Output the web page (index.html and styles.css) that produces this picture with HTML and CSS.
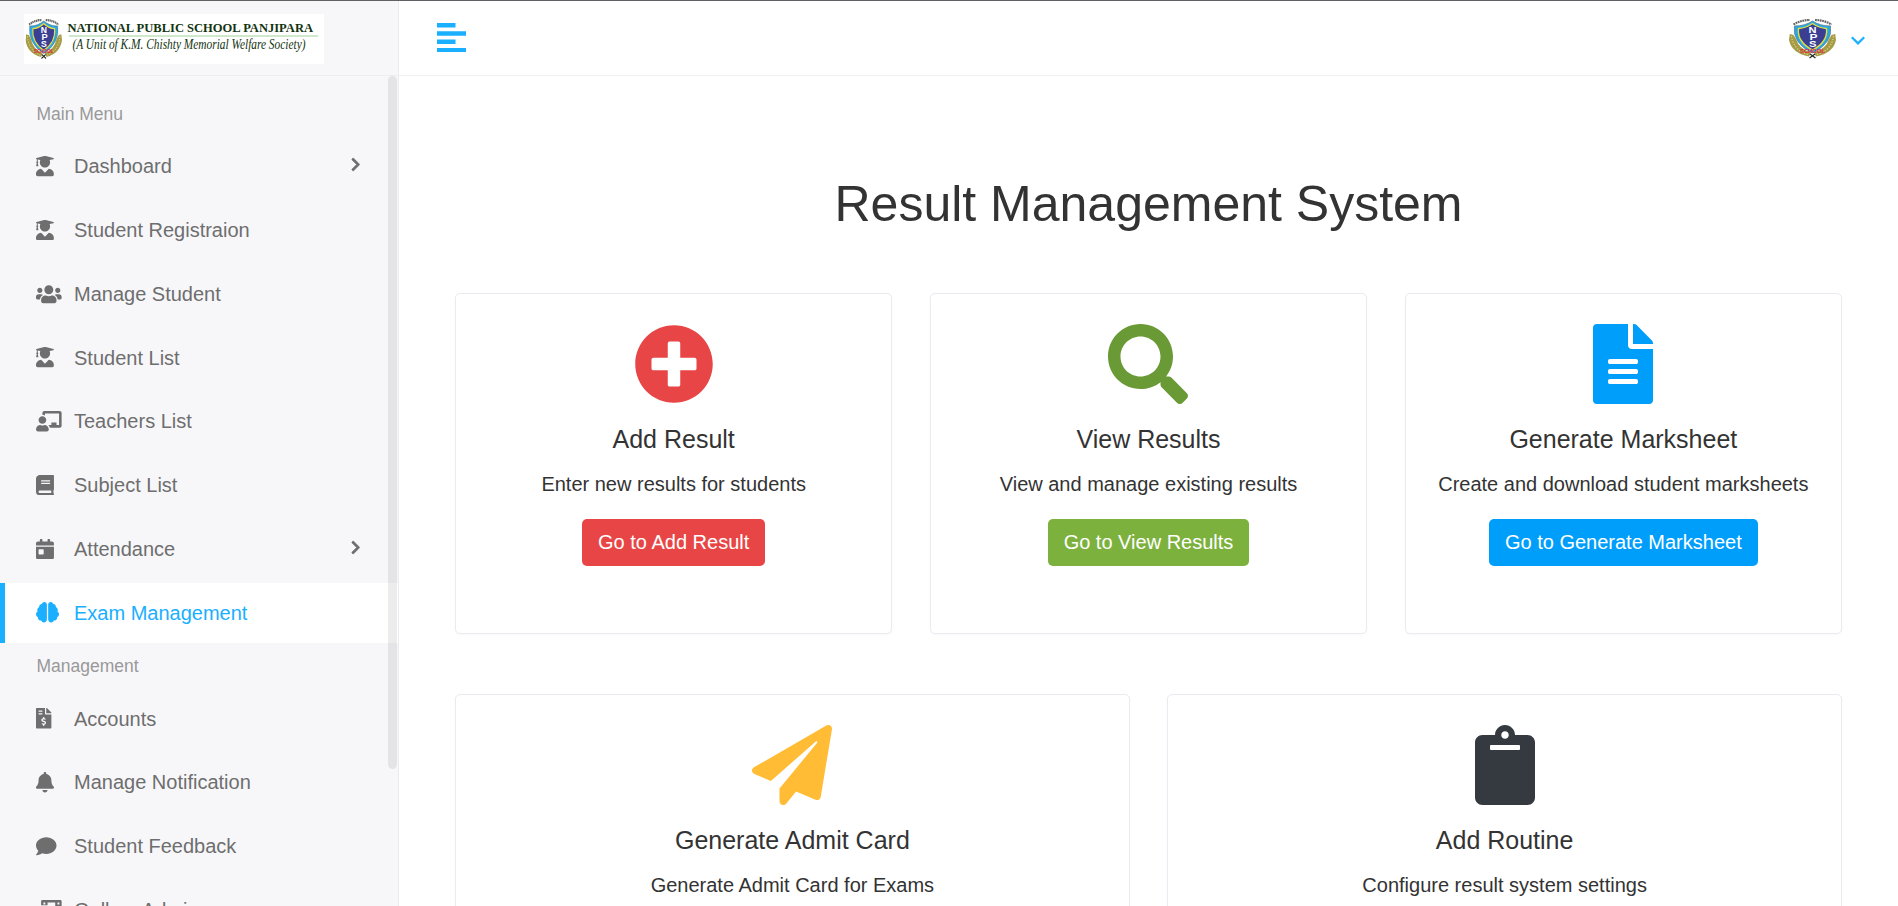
FILE: index.html
```html
<!DOCTYPE html>
<html lang="en">
<head>
<meta charset="utf-8">
<title>Result Management System</title>
<link rel="stylesheet" href="styles.css">
</head>
<body>
<svg class="defs" aria-hidden="true">
  <symbol id="graduate" viewBox="0 0 448 512"><path d="M319.4 320.6L224 416l-95.4-95.4C57.1 323.7 0 382.2 0 454.4v9.6c0 26.5 21.5 48 48 48h352c26.5 0 48-21.5 48-48v-9.6c0-72.2-57.1-130.7-128.6-133.8zM13.6 79.8l6.4 1.5v58.4c-7 4.2-12 11.5-12 20.3 0 8.4 4.6 15.4 11.1 19.7L3.5 242c-1.7 6.9 2.1 14 7.6 14h41.8c5.5 0 9.3-7.1 7.6-14l-15.6-62.3C51.4 175.4 56 168.4 56 160c0-8.8-5-16.1-12-20.3V87.1l66 15.9c-8.6 17.2-14 36.4-14 57 0 70.7 57.3 128 128 128s128-57.3 128-128c0-20.6-5.3-39.8-14-57l96.3-23.2c18.2-4.4 18.2-27.1 0-31.5l-190.4-46c-13-3.1-26.7-3.1-39.7 0L13.6 48.2c-18.1 4.4-18.1 27.2 0 31.6z"/></symbol>
  <symbol id="chevron" viewBox="0 0 320 512"><path d="M285.476 272.971L91.132 467.314c-9.373 9.373-24.569 9.373-33.941 0l-22.667-22.667c-9.357-9.357-9.375-24.522-.04-33.901L188.505 256 34.484 101.255c-9.335-9.379-9.317-24.544.04-33.901l22.667-22.667c9.373-9.373 24.569-9.373 33.941 0L285.475 239.03c9.373 9.372 9.373 24.568.001 33.941z"/></symbol>
  <symbol id="crest" viewBox="0 0 47 41" preserveAspectRatio="none">
    <path d="M.8 16L0 22Q2.500 35 20 38.500L22 34.500Q10 31 7 21L4.500 17zM46.200 16L47 22Q44.500 35 27 38.500L25 34.500Q37 31 40 21L42.500 17z" fill="#a59c45"/>
    <path d="M2.500 18Q4 32 19 36.500M44.500 18Q43 32 28 36.500" fill="none" stroke="#d8d08c" stroke-width="1.200" stroke-dasharray="1.300 1.500"/>
    <path d="M23.500 3Q16 8 5.500 8Q3 25 23.500 35Q44 25 41.500 8Q31 8 23.500 3Z" fill="#27a9e6" stroke="#5d7f90" stroke-width=".8"/>
    <path d="M23.500 5.500Q17 10 9.500 10.500Q8 24 23.500 32Q39 24 37.500 10.500Q30 10 23.500 5.500Z" fill="#3b3f93" stroke="#e3dd3e" stroke-width="1.400"/>
    <path d="M4.500 6.500Q12 2 21 2M26 2Q35 2 42.500 6.500" fill="none" stroke="#666" stroke-width="2.200" stroke-dasharray="1.800 .6"/>
    <text x="19.500" y="15" textLength="8" lengthAdjust="spacingAndGlyphs" class="crest-letter">N</text>
    <text x="20.500" y="21.500" textLength="8" lengthAdjust="spacingAndGlyphs" class="crest-letter">P</text>
    <text x="20" y="28.500" textLength="7.500" lengthAdjust="spacingAndGlyphs" class="crest-letter">S</text>
    <text x="11" y="34.600" textLength="25" lengthAdjust="spacingAndGlyphs" class="crest-name">SCHOOL</text>
    <path d="M20.500 40l5.500-4M26.500 40l-5.500-4" stroke="#222" stroke-width="1.200" fill="none"/>
  </symbol>
</svg>
<div class="app">
  <aside class="sidebar">
    <div class="brand">
      <svg class="logo" viewBox="0 0 300 50">
        <rect width="300" height="50" fill="#fff"/>
        <use href="#crest" x="1.500" y="4" width="36.500" height="41.500"/>
        <text x="43.500" y="17.900" textLength="245.500" lengthAdjust="spacingAndGlyphs" class="logo-name">NATIONAL PUBLIC SCHOOL PANJIPARA</text>
        <path d="M45 22h249" stroke="#cfe8cb" stroke-width="2"/>
        <text x="48.500" y="35.300" textLength="233" lengthAdjust="spacingAndGlyphs" class="logo-sub">(A Unit of K.M. Chishty Memorial Welfare Society)</text>
      </svg>
    </div>
    <nav class="menu">
      <div class="label">Main Menu</div>
      <a class="item"><span class="ico"><svg viewBox="0 0 448 512"><use href="#graduate"/></svg></span>Dashboard<svg class="arrow" viewBox="0 0 320 512"><use href="#chevron"/></svg></a>
      <a class="item"><span class="ico"><svg viewBox="0 0 448 512"><use href="#graduate"/></svg></span>Student Registraion</a>
      <a class="item"><span class="ico"><svg viewBox="0 0 640 512"><path d="M96 224c35.3 0 64-28.7 64-64s-28.7-64-64-64-64 28.7-64 64 28.7 64 64 64zm448 0c35.3 0 64-28.7 64-64s-28.7-64-64-64-64 28.7-64 64 28.7 64 64 64zm32 32h-64c-17.6 0-33.5 7.1-45.1 18.6 40.3 22.1 68.9 62 75.1 109.4h66c17.7 0 32-14.3 32-32v-32c0-35.3-28.7-64-64-64zm-256 0c61.9 0 112-50.1 112-112S381.9 32 320 32 208 82.1 208 144s50.1 112 112 112zm76.8 32h-8.3c-20.8 10-43.9 16-68.5 16s-47.6-6-68.5-16h-8.3C179.6 288 128 339.6 128 403.2V432c0 26.5 21.5 48 48 48h288c26.500 0 48-21.500 48-48v-28.800c0-63.600-51.600-115.200-115.200-115.200zm-223.700-13.400C161.500 263.100 145.600 256 128 256H64c-35.300 0-64 28.700-64 64v32c0 17.700 14.300 32 32 32h65.900c6.300-47.400 34.900-87.300 75.200-109.400z"/></svg></span>Manage Student</a>
      <a class="item"><span class="ico"><svg viewBox="0 0 448 512"><use href="#graduate"/></svg></span>Student List</a>
      <a class="item"><span class="ico"><svg viewBox="0 0 640 512"><path d="M208 352c-2.390 0-4.780.35-7.060 1.090C187.980 357.300 174.350 360 160 360c-14.350 0-27.980-2.700-40.950-6.910-2.280-.74-4.660-1.090-7.050-1.090C49.940 352-.33 402.480 0 464.620.14 490.880 21.730 512 48 512h224c26.270 0 47.860-21.120 48-47.380.33-62.140-49.940-112.620-112-112.620zm-48-32c53.020 0 96-42.980 96-96s-42.980-96-96-96-96 42.980-96 96 42.980 96 96 96zM592 0H208c-26.470 0-48 22.250-48 49.590V96c23.420 0 45.100 6.780 64 17.800V64h352v288h-64v-64H384v64h-76.240c19.100 16.690 33.120 38.730 39.690 64H592c26.470 0 48-22.250 48-49.590V49.590C640 22.250 618.470 0 592 0z"/></svg></span>Teachers List</a>
      <a class="item"><span class="ico"><svg viewBox="0 0 448 512"><path d="M448 360V24c0-13.300-10.700-24-24-24H96C43 0 0 43 0 96v320c0 53 43 96 96 96h328c13.300 0 24-10.700 24-24v-16c0-7.500-3.500-14.300-8.900-18.700-4.200-15.400-4.200-59.300 0-74.700 5.400-4.300 8.900-11.100 8.900-18.600zM128 134c0-3.300 2.700-6 6-6h212c3.300 0 6 2.700 6 6v20c0 3.300-2.700 6-6 6H134c-3.300 0-6-2.700-6-6v-20zm0 64c0-3.300 2.700-6 6-6h212c3.300 0 6 2.700 6 6v20c0 3.300-2.700 6-6 6H134c-3.300 0-6-2.700-6-6v-20zm253.400 250H96c-17.700 0-32-14.300-32-32 0-17.600 14.400-32 32-32h285.400c-1.900 17.100-1.900 46.900 0 64z"/></svg></span>Subject List</a>
      <a class="item"><span class="ico"><svg viewBox="0 0 448 512"><path d="M0 464c0 26.500 21.500 48 48 48h352c26.500 0 48-21.500 48-48V192H0v272zm64-192c0-8.800 7.200-16 16-16h96c8.800 0 16 7.200 16 16v96c0 8.800-7.200 16-16 16H80c-8.800 0-16-7.200-16-16v-96zM400 64h-48V16c0-8.800-7.200-16-16-16h-32c-8.800 0-16 7.200-16 16v48H160V16c0-8.800-7.200-16-16-16h-32c-8.800 0-16 7.200-16 16v48H48C21.500 64 0 85.500 0 112v48h448v-48c0-26.500-21.500-48-48-48z"/></svg></span>Attendance<svg class="arrow" viewBox="0 0 320 512"><use href="#chevron"/></svg></a>
      <a class="item active"><span class="ico"><svg viewBox="0 0 576 512"><path d="M208 0c-29.900 0-54.700 20.500-61.800 48.200-.8 0-1.400-.2-2.200-.2-35.300 0-64 28.700-64 64 0 4.800.6 9.500 1.700 14C52.500 138 32 166.600 32 200c0 12.600 3.200 24.300 8.300 34.900C16.300 248.700 0 274.300 0 304c0 33.300 20.400 61.900 49.400 73.900-.9 4.600-1.400 9.300-1.400 14.100 0 39.800 32.200 72 72 72 4.100 0 8.100-.5 12-1.200 9.600 28.500 36.200 49.200 68 49.200 39.800 0 72-32.200 72-72V64c0-35.300-28.700-64-64-64zm368 304c0-29.700-16.300-55.300-40.300-69.100 5.200-10.600 8.300-22.300 8.300-34.900 0-33.400-20.500-62-49.700-74 1-4.500 1.700-9.200 1.700-14 0-35.300-28.700-64-64-64-.8 0-1.500.2-2.200.2C422.700 20.500 397.900 0 368 0c-35.300 0-64 28.600-64 64v376c0 39.800 32.200 72 72 72 31.800 0 58.400-20.700 68-49.200 3.900.7 7.900 1.200 12 1.200 39.800 0 72-32.200 72-72 0-4.800-.5-9.500-1.400-14.100 29-12 49.400-40.600 49.400-73.900z"/></svg></span>Exam Management</a>
      <div class="label">Management</div>
      <a class="item"><span class="ico"><svg viewBox="0 0 384 512"><path d="M377 105L279.100 7c-4.500-4.500-10.600-7-17-7H256v128h128v-6.100c0-6.300-2.500-12.400-7-16.900zm-153 31V0H24C10.700 0 0 10.700 0 24v464c0 13.300 10.700 24 24 24h336c13.300 0 24-10.700 24-24V160H248c-13.200 0-24-10.800-24-24zM64 72c0-4.420 3.580-8 8-8h80c4.420 0 8 3.580 8 8v16c0 4.420-3.580 8-8 8H72c-4.420 0-8-3.580-8-8V72zm0 80v-16c0-4.420 3.580-8 8-8h80c4.420 0 8 3.580 8 8v16c0 4.420-3.580 8-8 8H72c-4.420 0-8-3.580-8-8zm144 263.880V440c0 4.420-3.580 8-8 8h-16c-4.420 0-8-3.580-8-8v-24.290c-11.290-.58-22.270-4.520-31.370-11.350-3.900-2.930-4.100-8.770-.57-12.140l11.750-11.210c2.770-2.640 6.890-2.760 10.130-.73 3.870 2.420 8.260 3.720 12.820 3.720h28.110c6.500 0 11.800-5.920 11.800-13.190 0-5.950-3.610-11.190-8.770-12.730l-45-13.500c-18.590-5.580-31.580-23.420-31.580-43.390 0-24.520 19.050-44.440 42.670-45.070V232c0-4.420 3.580-8 8-8h16c4.420 0 8 3.580 8 8v24.290c11.290.58 22.270 4.510 31.370 11.350 3.900 2.930 4.100 8.770.57 12.140l-11.750 11.210c-2.770 2.640-6.890 2.760-10.130.73-3.870-2.430-8.260-3.720-12.820-3.720h-28.110c-6.500 0-11.800 5.920-11.800 13.190 0 5.950 3.610 11.190 8.770 12.730l45 13.500c18.590 5.580 31.580 23.420 31.580 43.390 0 24.530-19.050 44.440-42.670 45.070z"/></svg></span>Accounts</a>
      <a class="item"><span class="ico"><svg viewBox="0 0 448 512"><path d="M224 512c35.320 0 63.970-28.650 63.970-64H160.030c0 35.350 28.650 64 63.970 64zm215.390-149.710c-19.320-20.760-55.470-51.990-55.470-154.290 0-77.700-54.480-139.900-127.940-155.160V32c0-17.670-14.320-32-31.980-32s-31.980 14.330-31.980 32v20.840C118.560 68.100 64.080 130.300 64.080 208c0 102.300-36.150 133.530-55.470 154.290-6 6.450-8.660 14.160-8.610 21.710.11 16.400 12.980 32 32.100 32h383.800c19.120 0 32-15.600 32.100-32 .05-7.550-2.610-15.270-8.610-21.710z"/></svg></span>Manage Notification</a>
      <a class="item"><span class="ico"><svg viewBox="0 0 512 512"><path d="M256 32C114.600 32 0 125.100 0 240c0 49.600 21.400 95 57 130.700C44.500 421.100 2.700 466 2.200 466.500c-2.200 2.300-2.800 5.700-1.500 8.700S4.800 480 8 480c66.300 0 116-31.800 140.600-51.400 32.700 12.300 69 19.400 107.400 19.400 141.400 0 256-93.100 256-208S397.400 32 256 32z"/></svg></span>Student Feedback</a>
      <a class="item"><span class="ico"><svg viewBox="0 0 640 512"><path fill-rule="evenodd" d="M608 0H160a32 32 0 0 0-32 32v96h160V64h192v320h128a32 32 0 0 0 32-32V32a32 32 0 0 0-32-32zM184 64h48v48h-48zM536 64h48v48h-48zM536 168h48v48h-48zM536 272h48v48h-48zM32 160h384a32 32 0 0 1 32 32v288a32 32 0 0 1-32 32H32a32 32 0 0 1-32-32V192a32 32 0 0 1 32-32zm32 288h320V336l-64-64-112 112-48-48-96 64z"/></svg></span>Gallery Admin</a>
    </nav>
    <div class="thumb"></div>
  </aside>
  <div class="page">
    <header class="topbar">
      <svg class="toggle" viewBox="0 0 29 30"><path d="M0 0h18.500v4.500H0zM0 8.200H29v4.500H0zM0 16.500h18.500V21H0zM0 25H29v4H0z"/></svg>
      <div class="user">
        <svg class="avatar" viewBox="0 0 47 41"><use href="#crest" width="47" height="41"/></svg>
        <svg class="caret" viewBox="0 0 14 9"><path d="M.8 1.200L7 7.400l6.200-6.200"/></svg>
      </div>
    </header>
    <main class="content">
      <h1>Result Management System</h1>
      <div class="row three">
        <section class="card red">
          <svg class="big" viewBox="0 0 512 512"><path d="M256 8C119 8 8 119 8 256s111 248 248 248 248-111 248-248S393 8 256 8zm144 276c0 6.600-5.400 12-12 12h-92v92c0 6.600-5.400 12-12 12h-56c-6.600 0-12-5.400-12-12v-92h-92c-6.600 0-12-5.400-12-12v-56c0-6.600 5.400-12 12-12h92v-92c0-6.600 5.400-12 12-12h56c6.600 0 12 5.400 12 12v92h92c6.600 0 12 5.400 12 12v56z"/></svg>
          <h2>Add Result</h2>
          <p>Enter new results for students</p>
          <a class="btn">Go to Add Result</a>
        </section>
        <section class="card green">
          <svg class="big" viewBox="0 0 512 512"><path d="M505 442.700L405.300 343c-4.500-4.500-10.600-7-17-7H372c27.600-35.300 44-79.700 44-128C416 93.100 322.900 0 208 0S0 93.100 0 208s93.100 208 208 208c48.300 0 92.700-16.400 128-44v16.300c0 6.400 2.500 12.500 7 17l99.700 99.700c9.400 9.400 24.600 9.400 33.900 0l28.300-28.300c9.400-9.400 9.400-24.600.1-34zM208 336c-70.700 0-128-57.200-128-128 0-70.700 57.200-128 128-128 70.700 0 128 57.200 128 128 0 70.700-57.200 128-128 128z"/></svg>
          <h2>View Results</h2>
          <p>View and manage existing results</p>
          <a class="btn">Go to View Results</a>
        </section>
        <section class="card blue">
          <svg class="big" viewBox="0 0 384 512"><path d="M224 136V0H24C10.700 0 0 10.700 0 24v464c0 13.300 10.700 24 24 24h336c13.300 0 24-10.700 24-24V160H248c-13.200 0-24-10.800-24-24zm64 236c0 6.600-5.400 12-12 12H108c-6.600 0-12-5.400-12-12v-8c0-6.600 5.400-12 12-12h168c6.600 0 12 5.400 12 12v8zm0-64c0 6.600-5.400 12-12 12H108c-6.600 0-12-5.400-12-12v-8c0-6.600 5.400-12 12-12h168c6.600 0 12 5.400 12 12v8zm0-72v8c0 6.600-5.400 12-12 12H108c-6.600 0-12-5.400-12-12v-8c0-6.600 5.400-12 12-12h168c6.600 0 12 5.400 12 12zm96-114.100v6.100H256V0h6.100c6.400 0 12.500 2.500 17 7l97.900 98c4.500 4.500 7 10.600 7 16.900z"/></svg>
          <h2>Generate Marksheet</h2>
          <p>Create and download student marksheets</p>
          <a class="btn">Go to Generate Marksheet</a>
        </section>
      </div>
      <div class="row two">
        <section class="card amber">
          <svg class="big" viewBox="0 0 512 512"><path d="M476 3.200L12.500 270.600c-18.100 10.400-15.800 35.600 2.200 43.200L121 358.400l287.300-253.200c5.500-4.900 13.300 2.600 8.600 8.300L176 407v80.500c0 23.600 28.500 32.900 42.500 15.800L282 426l124.600 52.200c14.200 6 30.400-2.900 33-18.200l72-432C515 7.800 493.300-6.800 476 3.200z"/></svg>
          <h2>Generate Admit Card</h2>
          <p>Generate Admit Card for Exams</p>
        </section>
        <section class="card dark">
          <svg class="big" viewBox="0 0 384 512"><path d="M384 112v352c0 26.510-21.490 48-48 48H48c-26.510 0-48-21.490-48-48V112c0-26.510 21.490-48 48-48h80c0-35.290 28.710-64 64-64s64 28.710 64 64h80c26.510 0 48 21.490 48 48zM192 40c-13.255 0-24 10.745-24 24s10.745 24 24 24 24-10.745 24-24-10.745-24-24-24m96 114v-20a6 6 0 0 0-6-6H102a6 6 0 0 0-6 6v20a6 6 0 0 0 6 6h180a6 6 0 0 0 6-6z"/></svg>
          <h2>Add Routine</h2>
          <p>Configure result system settings</p>
        </section>
      </div>
    </main>
  </div>
</div>
</body>
</html>
```
FILE: styles.css
```css
* { box-sizing: border-box; }
html { overflow: hidden; }
body {
  margin: 0;
  height: 906px;
  overflow: hidden;
  font: 20px/30px "Liberation Sans", Arial, sans-serif;
  color: #333;
  background: #fff;
}
.defs { display: none; }
.app {
  display: flex;
  height: 906px;
  overflow: hidden;
  border-top: 1px solid #626065;
}
.sidebar {
  position: relative;
  flex: none;
  width: 399px;
  overflow: hidden;
  background: #f7f7fa;
  border-right: 1px solid #eaeaf1;
}
.brand {
  height: 75px;
  padding: 13px 24px;
  border-bottom: 1px solid #ededf2;
}
.logo { display: block; width: 300px; height: 50px; }
.logo-name { font: bold 13.500px "Liberation Serif", serif; fill: #12330f; }
.logo-sub { font: italic 13.800px "Liberation Serif", serif; fill: #12330f; }
.crest-letter { font: bold 9px "Liberation Sans", sans-serif; fill: #fff; }
.crest-name { font: bold 6px "Liberation Sans", sans-serif; fill: #e0243f; }
.menu {
  display: flex;
  flex-direction: column;
  gap: 3.750px;
  padding-top: 18px;
}
.label {
  height: 38.500px;
  padding: 1px 0 0 36.500px;
  font-size: 17.500px;
  line-height: 38.500px;
  color: #999;
}
.item {
  display: flex;
  flex: none;
  align-items: center;
  height: 60px;
  padding: 0 38px 0 36px;
  color: #6e6e6e;
  white-space: nowrap;
}
.ico { display: flex; width: 38px; padding-left: .4px; }
.ico svg { height: 20.500px; fill: currentColor; }
.arrow {
  height: 15px;
  margin: 0 0 3px auto;
  fill: currentColor;
  stroke: currentColor;
  stroke-width: 18px;
}
.active {
  padding-left: 31px;
  color: #1ab0ff;
  background: #fff;
  border-left: 5px solid #1ab0ff;
}
.thumb {
  position: absolute;
  top: 75px;
  right: 1px;
  width: 9px;
  height: 693px;
  border-radius: 5px;
  background: rgba(0, 0, 0, .075);
}
.page { flex: 1; min-width: 0; }
.topbar {
  display: flex;
  justify-content: space-between;
  height: 75px;
  padding: 22px 33px 0 37.500px;
  border-bottom: 1px solid #f1f1f3;
}
.toggle { width: 29px; height: 30px; fill: #1ab0ff; }
.user { display: flex; gap: 15px; }
.avatar { width: 47px; height: 41px; margin-top: -5px; }
.caret {
  width: 14px;
  height: 9px;
  margin-top: 13px;
  fill: none;
  stroke: #1ab0ff;
  stroke-width: 2.200;
}
.content { padding: 98px 56px 0 56px; }
h1 {
  margin: 0 0 59px;
  font-size: 50px;
  font-weight: 400;
  line-height: 60px;
  text-align: center;
}
.row { display: grid; gap: 37.500px; margin-bottom: 60px; }
.three { grid-template-columns: repeat(3, 1fr); }
.two { grid-template-columns: repeat(2, 1fr); }
.card {
  display: flex;
  flex-direction: column;
  align-items: center;
  height: 341px;
  padding-top: 30px;
  border: 1px solid #eaeaf1;
  border-radius: 5px;
  box-shadow: 0 1px 3px rgba(0, 0, 0, .03);
}
.big { height: 80px; fill: currentColor; }
.card h2 {
  margin: 20px 0 15px;
  font-size: 25px;
  font-weight: 400;
  line-height: 30px;
  color: #333;
}
.card p { margin: 0 0 20px; color: #333; }
.btn {
  height: 47px;
  padding: 0 16px;
  border-radius: 5px;
  line-height: 46px;
  color: #fff;
}
.red { color: #e84646; }
.red .btn { background: #e84646; }
.green { color: #6a9a35; }
.green .btn { background: #7cb13e; }
.blue { color: #009efb; }
.blue .btn { background: #009efb; }
.amber { color: #ffbc34; }
.dark { color: #343a40; }
```
